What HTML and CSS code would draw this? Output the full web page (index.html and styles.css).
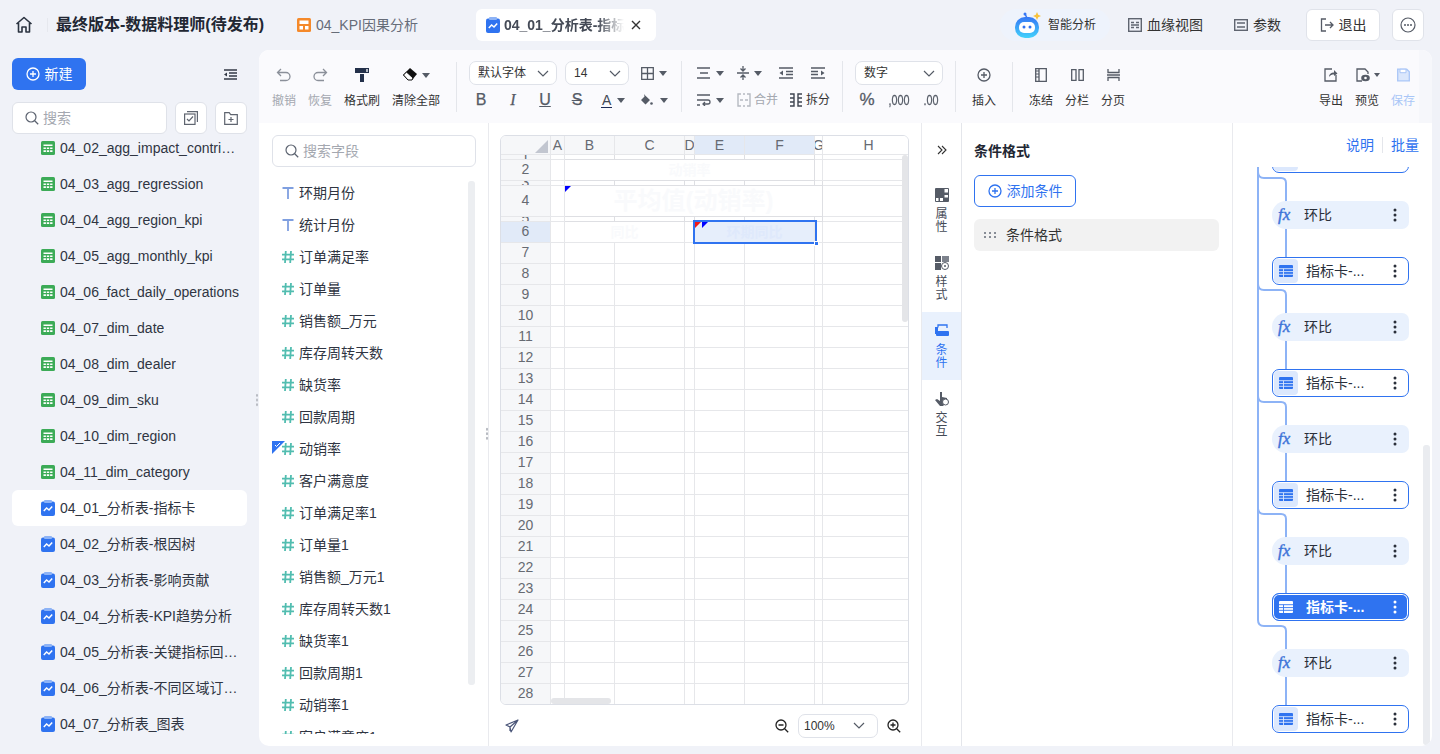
FILE: index.html
```html
<!DOCTYPE html>
<html lang="zh">
<head>
<meta charset="utf-8">
<title>04_01_分析表-指标卡</title>
<link rel="stylesheet" href="styles.css">
</head>
<body>
<svg class="defs" width="0" height="0" aria-hidden="true">
  <symbol id="i-tbl" viewBox="0 0 14 14"><rect width="14" height="14" rx="1.500" fill="#3cab57"/><path d="M2.500 3.500h9v1.600h-9zM2.500 6.400h2.400v1.700H2.500zM5.800 6.400h2.400v1.700H5.800zM9.100 6.400h2.400v1.700H9.100zM2.500 9.300h2.400V11H2.500zM5.800 9.300h2.400V11H5.800zM9.100 9.300h2.400V11H9.100z" fill="#fff"/></symbol>
  <symbol id="i-chart" viewBox="0 0 14 16"><rect y="1.500" width="14" height="14.500" rx="2" fill="#2f73f0"/><rect x="3" width="8" height="3" rx="1" fill="#8db3f6"/><path d="M2.800 11l2.800-3 2.400 2 3.200-3.600" fill="none" stroke="#fff" stroke-width="1.500"/></symbol>
  <symbol id="i-hash" viewBox="0 0 12 12"><path d="M3.800 0L3 12M9 0l-.8 12M0 3.700h12M0 8.300h12" fill="none" stroke="#52bdb0" stroke-width="1.800"/></symbol>
  <symbol id="i-t" viewBox="0 0 12 12"><path d="M.5 1h11M6 1v11" fill="none" stroke="#7f9fe0" stroke-width="1.800"/></symbol>
  <symbol id="i-kebab" viewBox="0 0 4 14"><circle cx="2" cy="2" r="1.500"/><circle cx="2" cy="7" r="1.500"/><circle cx="2" cy="12" r="1.500"/></symbol>
  <symbol id="i-chev" viewBox="0 0 12 7"><path d="M1 1l5 5 5-5" fill="none" stroke="currentColor" stroke-width="1.200"/></symbol>
  <symbol id="i-search" viewBox="0 0 14 14"><circle cx="6" cy="6" r="5" fill="none" stroke="#5c6370" stroke-width="1.200"/><path d="M9.700 9.700l3.500 3.500" stroke="#5c6370" stroke-width="1.300"/></symbol>
  <symbol id="i-plusc" viewBox="0 0 14 14"><circle cx="7" cy="7" r="6" fill="none" stroke="currentColor" stroke-width="1.300"/><path d="M7 4v6M4 7h6" stroke="currentColor" stroke-width="1.300"/></symbol>
  <symbol id="i-list" viewBox="0 0 14 12"><rect width="14" height="12" rx="1" fill="#2f73f0"/><path d="M0 3.700h14M0 6.600h14M0 9.300h14M4.500 3.700V12" stroke="#dce8fd" stroke-width=".9"/></symbol>
  <symbol id="i-listw" viewBox="0 0 14 12"><rect width="14" height="12" rx="1" fill="#fff"/><path d="M0 3.700h14M0 6.600h14M0 9.300h14M4.500 3.700V12" stroke="#2f73f0" stroke-width=".9"/></symbol>
</svg>

<div class="app">
  <header class="top">
    <svg class="home" width="18" height="18" viewBox="0 0 18 18"><path d="M1.500 8L9 1.500 16.500 8M3.500 7v9h3.500v-5h4v5h3.500V7" fill="none" stroke="#2b3340" stroke-width="1.600" stroke-linejoin="round"/></svg>
    <span class="top-sep"></span>
    <h1 class="title">最终版本-数据料理师(待发布)</h1>
    <div class="tab">
      <svg width="14" height="14" viewBox="0 0 14 14"><rect width="14" height="14" rx="1.500" fill="#f5892a"/><path d="M2.500 2.500h9V6h-9zM2.500 8h3.500v3.500H2.500zM8 8h3.500v3.500H8z" fill="#fff"/></svg>
      <span>04_KPI因果分析</span>
    </div>
    <div class="tab-active">
      <svg width="14" height="16"><use href="#i-chart"/></svg>
      <span class="tab-text">04_01_分析表-指标卡</span>
      <svg width="10" height="10" viewBox="0 0 10 10"><path d="M1 1l8 8M9 1l-8 8" stroke="#333" stroke-width="1.400"/></svg>
    </div>
    <div class="top-right">
      <div class="ai">
        <svg width="28" height="28" viewBox="0 0 28 28"><defs><linearGradient id="rb" x1="0" y1="0" x2="0" y2="1"><stop offset="0" stop-color="#3577f5"/><stop offset="1" stop-color="#43d2fb"/></linearGradient></defs><path d="M13 7L11 3" stroke="#3577f5" stroke-width="1.500"/><circle cx="11" cy="3" r="1.500" fill="#3577f5"/><rect x="1" y="6" width="24" height="21" rx="10" fill="url(#rb)"/><rect x="5" y="11" width="16" height="11" rx="5" fill="#fff"/><circle cx="10" cy="16" r="1.500" fill="#2f73f0"/><circle cx="16" cy="16" r="1.500" fill="#2f73f0"/><path d="M23 1l1.200 2.800L27 5l-2.800 1.200L23 9l-1.200-2.800L19 5l2.800-1.200z" fill="#f8c23c"/></svg>
        <span>智能分析</span>
      </div>
      <div class="top-link link-lineage">
        <svg width="14" height="14" viewBox="0 0 14 14"><rect x=".7" y=".7" width="12.600" height="12.600" fill="none" stroke="#5f6570" stroke-width="1.400"/><path d="M3 4.500h3M3 9.500h3M8 4.500h3M8 9.500h3M3 7h8" stroke="#5f6570" stroke-width="1.300"/></svg>
        <span>血缘视图</span>
      </div>
      <div class="top-link link-param">
        <svg width="14" height="12" viewBox="0 0 14 12"><rect x=".7" y=".7" width="12.600" height="10.600" fill="none" stroke="#5f6570" stroke-width="1.400"/><path d="M3 4h8M3 8h8" stroke="#5f6570" stroke-width="1.300"/></svg>
        <span>参数</span>
      </div>
      <button class="exit">
        <svg width="14" height="14" viewBox="0 0 14 14"><path d="M6 1H1.500v12H6M5 7h8M10 4l3 3-3 3" fill="none" stroke="#555b66" stroke-width="1.300"/></svg>
        <span>退出</span>
      </button>
      <button class="more">
        <svg width="16" height="16" viewBox="0 0 16 16"><circle cx="8" cy="8" r="7" fill="none" stroke="#555b66" stroke-width="1.200"/><circle cx="5" cy="8" r="1" fill="#555b66"/><circle cx="8" cy="8" r="1" fill="#555b66"/><circle cx="11" cy="8" r="1" fill="#555b66"/></svg>
      </button>
    </div>
  </header>

  <div class="body">
    <aside class="side">
      <div class="side-head">
        <button class="new"><svg width="14" height="14"><use href="#i-plusc"/></svg><span>新建</span></button>
        <svg width="13" height="11" viewBox="0 0 13 11"><path d="M0 1h13M5 4h8M5 7h8M0 10h13" stroke="#333a46" stroke-width="1.500"/><path d="M3 3.500v4L0 5.500z" fill="#333a46"/></svg>
      </div>
      <div class="side-tools">
        <div class="search side-search"><svg width="14" height="14"><use href="#i-search"/></svg><span>搜索</span></div>
        <div class="square"><svg width="14" height="14" viewBox="0 0 14 14"><rect x=".6" y="3" width="10.400" height="10.400" fill="none" stroke="#5f6570" stroke-width="1.200"/><path d="M3 .6h10.400V11M3 8l2 2 4-4.500" fill="none" stroke="#5f6570" stroke-width="1.200"/></svg></div>
        <div class="square"><svg width="14" height="13" viewBox="0 0 14 13"><path d="M.7 12.300V.7h4.500l1.500 2h6.600v9.600z" fill="none" stroke="#5f6570" stroke-width="1.200"/><path d="M7 5v5M4.500 7.500h5" stroke="#5f6570" stroke-width="1.200"/></svg></div>
      </div>
      <ul class="side-list">
        <li class="side-item clipped"><svg width="14" height="14"><use href="#i-tbl"/></svg><span>04_02_agg_impact_contribution</span></li>
        <li class="side-item"><svg width="14" height="14"><use href="#i-tbl"/></svg><span>04_03_agg_regression</span></li>
        <li class="side-item"><svg width="14" height="14"><use href="#i-tbl"/></svg><span>04_04_agg_region_kpi</span></li>
        <li class="side-item"><svg width="14" height="14"><use href="#i-tbl"/></svg><span>04_05_agg_monthly_kpi</span></li>
        <li class="side-item"><svg width="14" height="14"><use href="#i-tbl"/></svg><span>04_06_fact_daily_operations</span></li>
        <li class="side-item"><svg width="14" height="14"><use href="#i-tbl"/></svg><span>04_07_dim_date</span></li>
        <li class="side-item"><svg width="14" height="14"><use href="#i-tbl"/></svg><span>04_08_dim_dealer</span></li>
        <li class="side-item"><svg width="14" height="14"><use href="#i-tbl"/></svg><span>04_09_dim_sku</span></li>
        <li class="side-item"><svg width="14" height="14"><use href="#i-tbl"/></svg><span>04_10_dim_region</span></li>
        <li class="side-item"><svg width="14" height="14"><use href="#i-tbl"/></svg><span>04_11_dim_category</span></li>
        <li class="side-item active"><svg width="14" height="16"><use href="#i-chart"/></svg><span>04_01_分析表-指标卡</span></li>
        <li class="side-item"><svg width="14" height="16"><use href="#i-chart"/></svg><span>04_02_分析表-根因树</span></li>
        <li class="side-item"><svg width="14" height="16"><use href="#i-chart"/></svg><span>04_03_分析表-影响贡献</span></li>
        <li class="side-item"><svg width="14" height="16"><use href="#i-chart"/></svg><span>04_04_分析表-KPI趋势分析</span></li>
        <li class="side-item"><svg width="14" height="16"><use href="#i-chart"/></svg><span>04_05_分析表-关键指标回顾分析</span></li>
        <li class="side-item"><svg width="14" height="16"><use href="#i-chart"/></svg><span>04_06_分析表-不同区域订单分析</span></li>
        <li class="side-item"><svg width="14" height="16"><use href="#i-chart"/></svg><span>04_07_分析表_图表</span></li>
      </ul>
      <span class="grip side-grip"></span>
    </aside>

    <main class="panel">
      <div class="toolbar">
        <div class="tgroup g-edit">
          <div class="tool w24 off"><svg width="16" height="16" viewBox="0 0 16 16"><path d="M5 2L1.500 5.500 5 9M2 5.500h8a4 4 0 010 8H4" fill="none" stroke="#8b909a" stroke-width="1.300"/></svg><label>撤销</label></div>
          <div class="tool w24 off"><svg width="16" height="16" viewBox="0 0 16 16"><path d="M11 2l3.500 3.500L11 9M14 5.500H6a4 4 0 000 8h6" fill="none" stroke="#8b909a" stroke-width="1.300"/></svg><label>恢复</label></div>
          <div class="tool w36"><svg width="16" height="16" viewBox="0 0 16 16"><path d="M1 1h14v5H1z" fill="#23304a"/><rect x="12" y="2" width="2" height="3" fill="#b7bcc6"/><path d="M6 7h4v8H6z" fill="#23304a"/></svg><label>格式刷</label></div>
          <div class="tool w48"><span class="icon-row"><svg width="16" height="16" viewBox="0 0 16 16"><path d="M8 1l7 6-5 6H6L1 8z" fill="#111"/><path d="M4.500 5L11 11l-1 2H6L1.500 8z" fill="#fff" stroke="#111"/></svg><i class="caret"></i></span><label>清除全部</label></div>
        </div>
        <div class="tgroup g-font">
          <div class="trow">
            <div class="select w88"><span>默认字体</span><svg width="12" height="7"><use href="#i-chev"/></svg></div>
            <div class="select w64"><span>14</span><svg width="12" height="7"><use href="#i-chev"/></svg></div>
            <span class="ic ic-border"><svg width="13" height="13" viewBox="0 0 13 13"><path d="M.7.7h11.600v11.600H.7zM6.500.7v11.600M.7 6.500h11.600" fill="none" stroke="#555b66" stroke-width="1.300"/></svg><i class="caret"></i></span>
          </div>
          <div class="trow row-fmt">
            <span class="fmt">B</span>
            <span class="fmt fmt-i">I</span>
            <span class="fmt fmt-u">U</span>
            <span class="fmt fmt-s">S</span>
            <span class="ic ic-a"><span class="a-glyph">A</span><i class="caret"></i></span>
            <span class="ic ic-fill"><svg width="13" height="13" viewBox="0 0 13 13"><path d="M4 0l1.200 1.500L10 6l-4.500 4.500L1 6l3.500-3.500z" fill="#555b66"/><circle cx="11.500" cy="9.500" r="1.300" fill="#555b66"/></svg><i class="caret"></i></span>
          </div>
        </div>
        <div class="tgroup g-align">
          <div class="trow">
            <span class="ic w40"><svg width="14" height="12" viewBox="0 0 14 12"><path d="M0 1h13M3 6h8M0 11h13" stroke="#555b66" stroke-width="1.300"/></svg><i class="caret"></i></span>
            <span class="ic w42"><svg width="12" height="14" viewBox="0 0 12 14"><path d="M0 7h12M6 0v5M6 9v5M3.500 2.500L6 5l2.500-2.500M3.500 11.500L6 9l2.500 2.500" fill="none" stroke="#555b66" stroke-width="1.300"/></svg><i class="caret"></i></span>
            <span class="ic w32"><svg width="14" height="12" viewBox="0 0 14 12"><path d="M0 1h14M7 4.500h7M7 7.500h7M0 11h14" stroke="#555b66" stroke-width="1.300"/><path d="M4 3.500v5L.5 6z" fill="#555b66"/></svg></span>
            <span class="ic w14"><svg width="14" height="12" viewBox="0 0 14 12"><path d="M0 1h14M0 4.500h7M0 7.500h7M0 11h14" stroke="#555b66" stroke-width="1.300"/><path d="M10 3.500v5L13.500 6z" fill="#555b66"/></svg></span>
          </div>
          <div class="trow">
            <span class="ic w40"><svg width="14" height="12" viewBox="0 0 14 12"><path d="M0 1h13M0 6h11a2 2 0 010 4H6M8 8l-2 2 2 2M0 11h3" fill="none" stroke="#555b66" stroke-width="1.300"/></svg><i class="caret"></i></span>
            <span class="ic w52 merge"><svg width="14" height="14" viewBox="0 0 14 14"><path d="M4 1H1v12h3M10 1h3v12h-3M6 1h2M6 13h2M3 7h3M8 7h3" fill="none" stroke="#b5b9c1" stroke-width="1.400"/></svg><label>合并</label></span>
            <span class="ic split"><svg width="14" height="14" viewBox="0 0 14 14"><path d="M1 1h4v12H1M13 1H9v12h4M5 5H1M5 9H1M9 5h4M9 9h4" fill="none" stroke="#3e4450" stroke-width="1.400"/></svg><label>拆分</label></span>
          </div>
        </div>
        <div class="tgroup g-num">
          <div class="select w88"><span>数字</span><svg width="12" height="7"><use href="#i-chev"/></svg></div>
          <div class="trow num-row">
            <span class="pct">%</span><span class="narrow first-narrow">,000</span><span class="narrow">.00</span>
          </div>
        </div>
        <div class="tgroup g-insert">
          <div class="tool w24"><svg width="14" height="14" class="dark"><use href="#i-plusc"/></svg><label>插入</label></div>
        </div>
        <div class="tgroup g-layout">
          <div class="tool w24"><svg width="12" height="14" viewBox="0 0 12 14"><path d="M.7.7h10.600v12.600H.7z" fill="none" stroke="#555b66" stroke-width="1.300"/><path d="M4 1v12" stroke="#555b66" stroke-width="1.300"/><path d="M1 3h3M1 6h3M1 9h3" stroke="#555b66"/></svg><label>冻结</label></div>
          <div class="tool w24"><svg width="13" height="12" viewBox="0 0 13 12"><path d="M.7.7h4.300v10.600H.7zM8 .7h4.300v10.600H8z" fill="none" stroke="#555b66" stroke-width="1.300"/></svg><label>分栏</label></div>
          <div class="tool w24"><svg width="13" height="12" viewBox="0 0 13 12"><path d="M1 0v3.500h11V0M1 12V8.500h11V12M0 6h13" fill="none" stroke="#555b66" stroke-width="1.300"/></svg><label>分页</label></div>
        </div>
        <div class="tgroup g-file">
          <div class="tool w24"><svg width="14" height="14" viewBox="0 0 14 14"><path d="M8 1H1v12h11V7" fill="none" stroke="#555b66" stroke-width="1.300"/><path d="M5 9c0-3 2-4.500 5-4.500V2l3.500 3.500L10 8V6.500C8 6.500 6.500 7 5 9z" fill="#555b66"/></svg><label>导出</label></div>
          <div class="tool w24 overhang"><span class="icon-row"><svg width="14" height="14" viewBox="0 0 14 14"><path d="M6 13H1V1h8l3 3v2" fill="none" stroke="#555b66" stroke-width="1.300"/><ellipse cx="9.500" cy="10" rx="4.300" ry="3.300" fill="#555b66"/><circle cx="9.500" cy="10" r="1.300" fill="#fff"/></svg><i class="caret small"></i></span><label>预览</label></div>
          <div class="tool w24 save"><svg width="13" height="13" viewBox="0 0 13 13"><path d="M.7.7h9l2.600 2.600v9H.7z" fill="#dbe7fc" stroke="#a9c6f7" stroke-width="1.300"/><path d="M3 .7h6v3.500H3z" fill="#fff" stroke="#a9c6f7"/></svg><label>保存</label></div>
        </div>
      </div>

      <div class="content">
        <section class="fields">
          <div class="search field-search"><svg width="14" height="14"><use href="#i-search"/></svg><span>搜索字段</span></div>
          <ul class="field-list">
            <li><svg width="12" height="12"><use href="#i-t"/></svg>环期月份</li>
            <li><svg width="12" height="12"><use href="#i-t"/></svg>统计月份</li>
            <li><svg width="12" height="12"><use href="#i-hash"/></svg>订单满足率</li>
            <li><svg width="12" height="12"><use href="#i-hash"/></svg>订单量</li>
            <li><svg width="12" height="12"><use href="#i-hash"/></svg>销售额_万元</li>
            <li><svg width="12" height="12"><use href="#i-hash"/></svg>库存周转天数</li>
            <li><svg width="12" height="12"><use href="#i-hash"/></svg>缺货率</li>
            <li><svg width="12" height="12"><use href="#i-hash"/></svg>回款周期</li>
            <li class="checked"><svg class="corner" width="13" height="13" viewBox="0 0 13 13"><path d="M0 0h13L0 13z" fill="#2f73f0"/><path d="M3 4l1.500 1.500L8 2" fill="none" stroke="#fff"/></svg><svg width="12" height="12"><use href="#i-hash"/></svg>动销率</li>
            <li><svg width="12" height="12"><use href="#i-hash"/></svg>客户满意度</li>
            <li><svg width="12" height="12"><use href="#i-hash"/></svg>订单满足率1</li>
            <li><svg width="12" height="12"><use href="#i-hash"/></svg>订单量1</li>
            <li><svg width="12" height="12"><use href="#i-hash"/></svg>销售额_万元1</li>
            <li><svg width="12" height="12"><use href="#i-hash"/></svg>库存周转天数1</li>
            <li><svg width="12" height="12"><use href="#i-hash"/></svg>缺货率1</li>
            <li><svg width="12" height="12"><use href="#i-hash"/></svg>回款周期1</li>
            <li><svg width="12" height="12"><use href="#i-hash"/></svg>动销率1</li>
            <li><svg width="12" height="12"><use href="#i-hash"/></svg>客户满意度1</li>
          </ul>
          <span class="vbar field-bar"></span>
          <span class="grip field-grip"></span>
        </section>

        <section class="sheet-pane">
          <div class="sheet">
            <div class="grid">
              <div class="c h corner-cell"><i class="tri"></i></div><div class="c h">A</div><div class="c h">B</div><div class="c h">C</div><div class="c h">D</div><div class="c h sel">E</div><div class="c h sel">F</div><div class="c hw">G</div><div class="c hw">H</div>
              <div class="c n">1</div><div class="c"></div><div class="c m"></div><div class="c m"></div><div class="c m"></div><div class="c m"></div><div class="c m"></div><div class="c"></div><div class="c"></div>
              <div class="c n">2</div><div class="c"></div><div class="c m s5 faint">动销率</div><div class="c"></div><div class="c"></div>
              <div class="c n">3</div><div class="c"></div><div class="c m"></div><div class="c m"></div><div class="c m"></div><div class="c m"></div><div class="c m"></div><div class="c m"></div><div class="c"></div>
              <div class="c n">4</div><div class="c"></div><div class="c m s6 faint big"><i class="flag blue"></i>平均值(动销率)</div><div class="c"></div>
              <div class="c n">5</div><div class="c"></div><div class="c m"></div><div class="c m"></div><div class="c m"></div><div class="c m"></div><div class="c m"></div><div class="c m"></div><div class="c"></div>
              <div class="c n sel">6</div><div class="c"></div><div class="c s2 faint">同比</div><div class="c"></div><div class="c s2 faint picked">环期同比</div><div class="c"></div><div class="c"></div>
              <div class="c n">7</div><div class="c"></div><div class="c"></div><div class="c"></div><div class="c"></div><div class="c"></div><div class="c"></div><div class="c"></div><div class="c"></div>
              <div class="c n">8</div><div class="c"></div><div class="c"></div><div class="c"></div><div class="c"></div><div class="c"></div><div class="c"></div><div class="c"></div><div class="c"></div>
              <div class="c n">9</div><div class="c"></div><div class="c"></div><div class="c"></div><div class="c"></div><div class="c"></div><div class="c"></div><div class="c"></div><div class="c"></div>
              <div class="c n">10</div><div class="c"></div><div class="c"></div><div class="c"></div><div class="c"></div><div class="c"></div><div class="c"></div><div class="c"></div><div class="c"></div>
              <div class="c n">11</div><div class="c"></div><div class="c"></div><div class="c"></div><div class="c"></div><div class="c"></div><div class="c"></div><div class="c"></div><div class="c"></div>
              <div class="c n">12</div><div class="c"></div><div class="c"></div><div class="c"></div><div class="c"></div><div class="c"></div><div class="c"></div><div class="c"></div><div class="c"></div>
              <div class="c n">13</div><div class="c"></div><div class="c"></div><div class="c"></div><div class="c"></div><div class="c"></div><div class="c"></div><div class="c"></div><div class="c"></div>
              <div class="c n">14</div><div class="c"></div><div class="c"></div><div class="c"></div><div class="c"></div><div class="c"></div><div class="c"></div><div class="c"></div><div class="c"></div>
              <div class="c n">15</div><div class="c"></div><div class="c"></div><div class="c"></div><div class="c"></div><div class="c"></div><div class="c"></div><div class="c"></div><div class="c"></div>
              <div class="c n">16</div><div class="c"></div><div class="c"></div><div class="c"></div><div class="c"></div><div class="c"></div><div class="c"></div><div class="c"></div><div class="c"></div>
              <div class="c n">17</div><div class="c"></div><div class="c"></div><div class="c"></div><div class="c"></div><div class="c"></div><div class="c"></div><div class="c"></div><div class="c"></div>
              <div class="c n">18</div><div class="c"></div><div class="c"></div><div class="c"></div><div class="c"></div><div class="c"></div><div class="c"></div><div class="c"></div><div class="c"></div>
              <div class="c n">19</div><div class="c"></div><div class="c"></div><div class="c"></div><div class="c"></div><div class="c"></div><div class="c"></div><div class="c"></div><div class="c"></div>
              <div class="c n">20</div><div class="c"></div><div class="c"></div><div class="c"></div><div class="c"></div><div class="c"></div><div class="c"></div><div class="c"></div><div class="c"></div>
              <div class="c n">21</div><div class="c"></div><div class="c"></div><div class="c"></div><div class="c"></div><div class="c"></div><div class="c"></div><div class="c"></div><div class="c"></div>
              <div class="c n">22</div><div class="c"></div><div class="c"></div><div class="c"></div><div class="c"></div><div class="c"></div><div class="c"></div><div class="c"></div><div class="c"></div>
              <div class="c n">23</div><div class="c"></div><div class="c"></div><div class="c"></div><div class="c"></div><div class="c"></div><div class="c"></div><div class="c"></div><div class="c"></div>
              <div class="c n">24</div><div class="c"></div><div class="c"></div><div class="c"></div><div class="c"></div><div class="c"></div><div class="c"></div><div class="c"></div><div class="c"></div>
              <div class="c n">25</div><div class="c"></div><div class="c"></div><div class="c"></div><div class="c"></div><div class="c"></div><div class="c"></div><div class="c"></div><div class="c"></div>
              <div class="c n">26</div><div class="c"></div><div class="c"></div><div class="c"></div><div class="c"></div><div class="c"></div><div class="c"></div><div class="c"></div><div class="c"></div>
              <div class="c n">27</div><div class="c"></div><div class="c"></div><div class="c"></div><div class="c"></div><div class="c"></div><div class="c"></div><div class="c"></div><div class="c"></div>
              <div class="c n">28</div><div class="c"></div><div class="c"></div><div class="c"></div><div class="c"></div><div class="c"></div><div class="c"></div><div class="c"></div><div class="c"></div>
            </div>
            <div class="selection"><i class="flag red"></i><i class="flag blue second"></i><i class="handle"></i></div>
            <span class="sheet-v"></span>
            <span class="sheet-h"></span>
          </div>
          <div class="sheet-foot">
            <svg width="14" height="14" viewBox="0 0 14 14"><path d="M13 1L1 6l4 2 1 5zM13 1L5 8v4" fill="none" stroke="#4a5578" stroke-width="1.200" stroke-linejoin="round"/></svg>
            <div class="zoom">
              <svg width="14" height="14" viewBox="0 0 14 14"><circle cx="6" cy="6" r="5" fill="none" stroke="#222" stroke-width="1.300"/><path d="M9.700 9.700l3.500 3.500M3.500 6h5" stroke="#222" stroke-width="1.300"/></svg>
              <div class="select zoom-select"><span>100%</span><svg width="12" height="7"><use href="#i-chev"/></svg></div>
              <svg width="14" height="14" viewBox="0 0 14 14"><circle cx="6" cy="6" r="5" fill="none" stroke="#222" stroke-width="1.300"/><path d="M9.700 9.700l3.500 3.500M3.500 6h5M6 3.500v5" stroke="#222" stroke-width="1.300"/></svg>
            </div>
          </div>
        </section>

        <nav class="rail">
          <div class="rail-top"><svg width="10" height="10" viewBox="0 0 10 10"><path d="M1 1l4 4-4 4M5 1l4 4-4 4" fill="none" stroke="#333" stroke-width="1.100"/></svg></div>
          <div class="rail-item"><svg width="14" height="14" viewBox="0 0 14 14"><rect width="14" height="14" rx="1" fill="#555b66"/><path d="M9.500 1h3.500v3.500H9.500zM1 10h2.500v3H1zM5 10h3v3H5zM9.500 7h3.500v2.500H9.500z" fill="#fff"/></svg><span>属性</span></div>
          <div class="rail-item"><svg width="14" height="14" viewBox="0 0 14 14"><rect width="6" height="6" fill="#555b66"/><rect x="7" width="7" height="6" fill="#7d828c"/><rect y="7" width="6" height="7" fill="#555b66"/><circle cx="10" cy="10" r="3.500" fill="#fff" stroke="#555b66"/><circle cx="10" cy="10" r="1" fill="#555b66"/></svg><span>样式</span></div>
          <div class="rail-item on"><svg width="14" height="14" viewBox="0 0 14 14"><path d="M3 3.500V1h9v3" fill="none" stroke="#2f73f0" stroke-width="1.300"/><rect y="3" width="3" height="7" fill="#2f73f0"/><rect x="1" y="7" width="13" height="5" rx="1" fill="#2f73f0"/></svg><span>条件</span></div>
          <div class="rail-item"><svg width="14" height="14" viewBox="0 0 14 14"><path d="M5 0h2v5l5 1v4L8 14H5L0 8l2-1 3 2z" fill="#555b66"/><circle cx="10.500" cy="10" r="3" fill="#fff" stroke="#555b66"/></svg><span>交互</span></div>
        </nav>

        <section class="config">
          <h2>条件格式</h2>
          <button class="add"><svg width="14" height="14"><use href="#i-plusc"/></svg><span>添加条件</span></button>
          <div class="cond">
            <svg width="12" height="6" viewBox="0 0 12 6"><path d="M0 0h2v2H0zM5 0h2v2H5zM10 0h2v2h-2zM0 4h2v2H0zM5 4h2v2H5zM10 4h2v2h-2z" fill="#888d96"/></svg>
            <span>条件格式</span>
          </div>
        </section>

        <section class="relations">
          <div class="rel-head"><a>说明</a><i></i><a>批量</a></div>
          <div class="rel-body">
            <svg class="links" width="70" height="579" viewBox="0 0 70 579"><path d="M25 0V453M25 5q0 6 6 6h17q5 0 5 5v74M25 117q0 6 6 6h17q5 0 5 5v74M25 229q0 6 6 6h17q5 0 5 5v74M25 341q0 6 6 6h17q5 0 5 5v74M25 453q0 6 6 6h17q5 0 5 5v74" fill="none" stroke="#8db3f6" stroke-width="2"/></svg>
            <div class="nodes">
              <div class="node tbl first"><span class="nico"><svg width="14" height="12"><use href="#i-list"/></svg></span><span class="nname">指标卡-...</span><svg class="keb" width="4" height="14"><use href="#i-kebab"/></svg></div>
              <div class="node fx"><em>fx</em><span class="nname">环比</span><svg class="keb" width="4" height="14"><use href="#i-kebab"/></svg></div>
              <div class="node tbl"><span class="nico"><svg width="14" height="12"><use href="#i-list"/></svg></span><span class="nname">指标卡-...</span><svg class="keb" width="4" height="14"><use href="#i-kebab"/></svg></div>
              <div class="node fx"><em>fx</em><span class="nname">环比</span><svg class="keb" width="4" height="14"><use href="#i-kebab"/></svg></div>
              <div class="node tbl"><span class="nico"><svg width="14" height="12"><use href="#i-list"/></svg></span><span class="nname">指标卡-...</span><svg class="keb" width="4" height="14"><use href="#i-kebab"/></svg></div>
              <div class="node fx"><em>fx</em><span class="nname">环比</span><svg class="keb" width="4" height="14"><use href="#i-kebab"/></svg></div>
              <div class="node tbl"><span class="nico"><svg width="14" height="12"><use href="#i-list"/></svg></span><span class="nname">指标卡-...</span><svg class="keb" width="4" height="14"><use href="#i-kebab"/></svg></div>
              <div class="node fx"><em>fx</em><span class="nname">环比</span><svg class="keb" width="4" height="14"><use href="#i-kebab"/></svg></div>
              <div class="node tbl cur"><span class="nico"><svg width="14" height="12"><use href="#i-listw"/></svg></span><span class="nname">指标卡-...</span><svg class="keb" width="4" height="14"><use href="#i-kebab"/></svg></div>
              <div class="node fx"><em>fx</em><span class="nname">环比</span><svg class="keb" width="4" height="14"><use href="#i-kebab"/></svg></div>
              <div class="node tbl"><span class="nico"><svg width="14" height="12"><use href="#i-list"/></svg></span><span class="nname">指标卡-...</span><svg class="keb" width="4" height="14"><use href="#i-kebab"/></svg></div>
            </div>
            <span class="vbar rel-bar"></span>
          </div>
        </section>
      </div>
    </main>
  </div>
</div>
</body>
</html>
```

FILE: styles.css
```css
* { box-sizing: border-box; }
html, body { margin: 0; height: 100%; overflow: hidden; }
body {
  background: #f0f2f8;
  color: #2a2f3a;
  font: 14px/20px "Liberation Sans", "Noto Sans CJK SC", sans-serif;
}
ul { list-style: none; margin: 0; padding: 0; }
h1, h2 { margin: 0; }
button { font: inherit; padding: 0; }
svg { display: block; flex: none; }
.defs { position: absolute; }
.app { width: 1440px; height: 754px; display: flex; flex-direction: column; }

/* top bar */
.top { height: 50px; flex: none; display: flex; align-items: center; padding-left: 15px; padding-right: 16px; }
.top-sep { width: 1px; height: 14px; background: #e6e8ee; margin-left: 14px; }
.title { font-size: 16px; font-weight: 700; color: #222733; margin-left: 8px; white-space: nowrap; }
.tab { display: flex; align-items: center; gap: 5px; margin-left: 33px; color: #666c78; }
.tab-active { display: flex; align-items: center; width: 180px; height: 32px; background: #fff; border-radius: 6px; margin-left: 58px; padding-left: 10px; }
.tab-text {
  width: 120px; margin: 0 7px 0 4px; overflow: hidden; white-space: nowrap; font-weight: 700; color: #444a56;
  -webkit-mask-image: linear-gradient(90deg, #000 78%, transparent);
  mask-image: linear-gradient(90deg, #000 78%, transparent);
}
.top-right { margin-left: auto; display: flex; align-items: center; }
.ai { width: 110px; height: 32px; background: #eef3fc; border-radius: 16px; display: flex; align-items: center; padding-left: 14px; gap: 6px; font-size: 12px; color: #333; }
.top-link { display: flex; align-items: center; gap: 5px; color: #333; }
.link-lineage { margin-left: 18px; }
.link-param { margin-left: 31px; }
.exit { margin-left: 25px; width: 74px; height: 32px; background: #fff; border: 1px solid #e0e3ea; border-radius: 6px; display: flex; align-items: center; justify-content: center; gap: 5px; color: #333; }
.more { margin-left: 12px; width: 32px; height: 32px; background: #fff; border: 1px solid #e0e3ea; border-radius: 6px; display: flex; align-items: center; justify-content: center; }

.body { flex: 1; display: flex; min-height: 0; }

/* sidebar */
.side { width: 259px; flex: none; padding: 8px 12px 0; position: relative; display: flex; flex-direction: column; }
.side-head { display: flex; align-items: center; justify-content: space-between; padding-right: 10px; }
.new { width: 74px; height: 32px; border: 0; border-radius: 6px; background: #2f73f0; color: #fff; display: flex; align-items: center; justify-content: center; gap: 5px; }
.side-tools { display: flex; gap: 8px; margin-top: 12px; }
.search { display: flex; align-items: center; gap: 4px; height: 32px; background: #fff; border: 1px solid #dfe2e9; border-radius: 6px; padding-left: 12px; color: #a4a8b0; }
.side-search { width: 155px; }
.square { width: 32px; height: 32px; background: #fff; border: 1px solid #dfe2e9; border-radius: 6px; display: flex; align-items: center; justify-content: center; }
.side-list { margin-top: 3px; overflow: hidden; }
.side-item { height: 36px; display: flex; align-items: center; gap: 5px; padding-left: 29px; padding-right: 6px; border-radius: 6px; color: #2f3542; }
.side-item span { overflow: hidden; text-overflow: ellipsis; white-space: nowrap; }
.side-item.clipped { height: 29px; padding-bottom: 7px; }
.side-item.active { background: #fff; }
.grip { position: absolute; background-image: radial-gradient(circle, #b5b8bf 1px, transparent 1.200px); }
.side-grip { right: 0; top: 343px; width: 4px; height: 14px; background-size: 4px 4.700px; }

/* panel */
.panel { width: 1173px; height: 696px; background: #fff; border-radius: 10px; overflow: hidden; display: flex; flex-direction: column; }
.toolbar { height: 73px; flex: none; background: linear-gradient(90deg, #fafafd 1160px, #f6f7fb 1160px); display: flex; padding-top: 12px; padding-bottom: 11px; color: #333; }
.tgroup { height: 50px; border-right: 1px solid #e4e6eb; display: flex; }
.g-edit { width: 198px; padding-left: 13px; gap: 12px; }
.g-font { width: 225px; padding-left: 12px; flex-direction: column; margin-top: -1px; height: 51px; }
.g-align { width: 161px; padding-left: 15px; flex-direction: column; margin-top: -1px; height: 51px; }
.g-num { width: 113px; padding-left: 12px; flex-direction: column; margin-top: -1px; height: 51px; }
.g-insert { width: 57px; padding-left: 16px; }
.g-layout { padding-left: 16px; gap: 12px; border-right: 0; }
.g-file { margin-left: auto; border-right: 0; gap: 12px; padding-right: 17px; }
.tool { display: flex; flex-direction: column; align-items: center; font-size: 12px; line-height: 16px; }
.tool svg, .tool .icon-row { height: 16px; margin-top: 5px; margin-bottom: 10px; }
.tool .icon-row svg { margin: 0; }
.tool label { white-space: nowrap; }
.w24 { width: 24px; }
.w36 { width: 36px; }
.w48 { width: 48px; }
.off { color: #a4a8b0; }
.save { color: #a9c6f7; }
.dark { color: #555b66; }
.icon-row { display: flex; align-items: center; gap: 4px; }
.caret { display: block; width: 0; height: 0; border: 4px solid transparent; border-top: 5px solid #555b66; border-bottom: 0; flex: none; }
.caret.small { border-width: 3px; border-top-width: 4px; border-bottom-width: 0; }
.overhang .icon-row { margin-left: 2px; }
.trow { display: flex; align-items: center; }
.select { height: 24px; border: 1px solid #dfe2e9; border-radius: 7px; background: #fff; display: flex; align-items: center; justify-content: space-between; padding: 0 7px 0 8px; font-size: 12px; color: #333; flex: none; }
.select svg { color: #555b66; }
.w88 { width: 88px; }
.w64 { width: 64px; margin-left: 8px; }
.ic { display: flex; align-items: center; gap: 5px; flex: none; font-size: 12px; }
.ic-border { margin-left: 12px; }
.row-fmt { margin-top: 4px; height: 22px; padding-left: 6px; }
.fmt { width: 12px; text-align: center; color: #555b66; font-size: 16px; line-height: 22px; margin-right: 20px; -webkit-text-stroke: .25px #555b66; }
.fmt-i { font-family: "Liberation Serif", serif; font-style: italic; }
.fmt-u { text-decoration: underline; text-underline-offset: 1px; }
.fmt-s { text-decoration: line-through; }
.ic-a { margin-left: -2px; }
.a-glyph { color: #444a56; border-bottom: 1.500px solid #1c2a55; line-height: 14px; font-size: 14px; padding: 0 1px; }
.ic-fill { margin-left: 15px; gap: 7px; }
.g-align .trow { height: 24px; }
.g-align .trow + .trow { margin-top: 4px; height: 22px; }
.w40 { width: 40px; }
.w42 { width: 42px; }
.w32 { width: 32px; }
.w14 { width: 14px; }
.w52 { width: 52px; }
.merge { color: #a4a8b0; gap: 3px; }
.split { gap: 3px; color: #333; }
.num-row { margin-top: 4px; height: 22px; color: #555b66; }
.pct { width: 24px; text-align: center; font-size: 17px; -webkit-text-stroke: .3px #555b66; }
.narrow { width: 32px; text-align: center; font-size: 15px; transform: scaleX(.72); white-space: nowrap; -webkit-text-stroke: .3px #555b66; }
.first-narrow { margin-left: 4px; }

.content { flex: 1; min-height: 0; display: flex; }

/* fields */
.fields { width: 230px; flex: none; position: relative; border-right: 1px solid #e9eaee; padding: 12px 0 0 13px; }
.field-search { width: 204px; }
.field-list { margin-top: 10px; margin-left: -13px; height: 557px; overflow: hidden; }
.field-list li { height: 32px; display: flex; align-items: center; gap: 5px; padding-left: 23px; color: #2f3542; position: relative; }
.corner { position: absolute; left: 13px; top: 8px; }
.vbar { position: absolute; display: block; background: #eceef1; border-radius: 3px; }
.field-bar { left: 209px; top: 58px; width: 7px; height: 504px; }
.field-grip { left: 225px; top: 304px; width: 8px; height: 13px; background-size: 6px 4.500px; }

/* sheet */
.sheet-pane { width: 433px; flex: none; padding: 12px 12px 0 11px; display: flex; flex-direction: column; border-right: 1px solid #e9eaee; }
.sheet { height: 570px; width: 409px; flex: none; border: 1px solid #dcdfe6; border-radius: 6px; position: relative; overflow: hidden; }
.grid { display: grid; grid-template-columns: 50px 14px 50px 70px 10px 50px 70px 8px 92px; grid-template-rows: 19px 5px 21px 5px 31px 5px 21px repeat(22, 21px); }
.c { border-right: 1px solid #e6e7ea; border-bottom: 1px solid #e6e7ea; overflow: hidden; display: flex; align-items: center; justify-content: center; color: #666a72; font-size: 14px; min-width: 0; position: relative; white-space: nowrap; }
.h { background: #f6f7f9; }
.h.sel { background: #e1eaf8; }
.hw { background: #fff; }
.n { background: #f6f7f9; padding-bottom: 2px; }
.n.sel { background: #e1eaf8; }
.corner-cell { justify-content: flex-end; align-items: flex-end; }
.tri { display: block; width: 0; height: 0; border-left: 13px solid transparent; border-bottom: 13px solid #c2c6d0; margin: 0 2px 1px 0; }
.m { border-color: #dedfe3; }
.s2 { grid-column: span 2; }
.s5 { grid-column: span 5; }
.s6 { grid-column: span 6; }
.faint { color: #f9fafc; font-weight: 700; }
.big { font-size: 24px; }
.picked { background: #e6eefb; color: #dfe9fb; }
.flag { position: absolute; display: block; width: 0; height: 0; border-top: 6px solid #00f; border-right: 6px solid transparent; left: 0; top: 0; }
.flag.red { border-top-color: #f21a1a; }
.flag.second { left: 7px; }
.selection { position: absolute; left: 192px; top: 84px; width: 124px; height: 24px; border: 2px solid #2f73f0; }
.handle { position: absolute; right: -4px; bottom: -4px; width: 5px; height: 5px; background: #2f73f0; border: 1px solid #fff; }
.sheet-v { position: absolute; right: 0; top: 19px; width: 6px; height: 167px; background: #e4e5e8; border-radius: 3px; }
.sheet-h { position: absolute; left: 50px; bottom: 0; width: 60px; height: 6px; background: #e4e5e8; border-radius: 3px; }
.sheet-foot { flex: 1; display: flex; align-items: center; justify-content: space-between; padding: 0 8px 0 5px; }
.zoom { display: flex; align-items: center; gap: 9px; }
.zoom-select { width: 80px; color: #333; padding: 0 12px 0 5px; }

/* rail */
.rail { width: 40px; flex: none; border-right: 1px solid #e4e6eb; display: flex; flex-direction: column; }
.rail-top { height: 52px; display: flex; align-items: center; justify-content: center; margin-top: 1px; }
.rail-item { height: 68px; display: flex; flex-direction: column; align-items: center; padding-top: 12px; color: #444a56; font-size: 12px; line-height: 13px; }
.rail-item svg { margin-bottom: 6px; }
.rail-item span { width: 12px; text-align: center; word-break: break-all; }
.rail-item.on { background: #e9f1fd; color: #2f73f0; }

/* config */
.config { width: 271px; flex: none; border-right: 1px solid #e9eaee; padding: 18px 13px 0 12px; }
.config h2 { font-size: 14px; font-weight: 700; line-height: 20px; color: #222733; }
.add { margin-top: 14px; width: 102px; height: 32px; background: #fff; border: 1px solid #2f73f0; border-radius: 6px; color: #2f73f0; display: flex; align-items: center; justify-content: center; gap: 5px; font-size: 14px; }
.cond { margin-top: 12px; height: 32px; background: #f2f2f2; border-radius: 6px; display: flex; align-items: center; gap: 10px; padding-left: 10px; color: #333; }

/* relations */
.relations { flex: 1; min-width: 0; display: flex; flex-direction: column; }
.rel-head { height: 44px; flex: none; display: flex; align-items: center; justify-content: flex-end; padding-right: 13px; color: #2f73f0; gap: 8px; }
.rel-head i { width: 1px; height: 16px; background: #e4e6eb; }
.rel-body { flex: 1; position: relative; overflow: hidden; min-height: 0; }
.links { position: absolute; left: 0; top: 0; }
.nodes { position: relative; margin-left: 39px; width: 137px; display: flex; flex-direction: column; gap: 28px; }
.node { height: 28px; flex: none; display: flex; align-items: center; background: #fff; border-radius: 7px; position: relative; color: #2a2f3a; }
.node.first { margin-top: -22px; }
.node.tbl { border: 1px solid #2f73f0; padding: 1px; }
.nico { width: 24px; height: 24px; background: #dce8fd; border-radius: 4px; display: flex; align-items: center; justify-content: center; flex: none; margin-right: 8px; }
.nname { white-space: nowrap; }
.keb { position: absolute; right: 12px; top: 7px; fill: #2a2f3a; }
.node.tbl .keb { top: 6px; right: 11px; }
.node.fx { background: #e9f1fd; border-radius: 14px 7px 7px 14px; padding-left: 6px; }
.node.fx em { font: italic 400 17px/20px "Liberation Serif", serif; color: #3d74d8; width: 26px; -webkit-text-stroke: .4px #3d74d8; }
.node.cur { background: #2f73f0; box-shadow: inset 0 0 0 1px #fff; color: #fff; font-weight: 700; }
.node.cur .nico { background: transparent; }
.node.cur .keb { fill: #fff; }
.rel-bar { left: 190px; top: 278px; width: 7px; height: 300px; background: #eaecf0; }
```
